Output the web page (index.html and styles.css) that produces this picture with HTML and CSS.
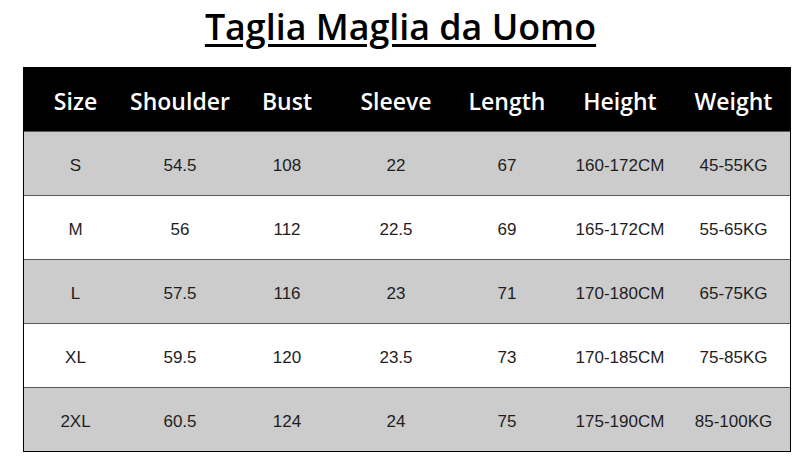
FILE: index.html
```html
<!DOCTYPE html>
<html lang="it">
<head>
<meta charset="utf-8">
<title>Taglia Maglia da Uomo</title>
<link rel="stylesheet" href="styles.css">
</head>
<body>
<h1 class="title">Taglia Maglia da Uomo</h1>
<div class="table">
  <div class="row head">
    <div>Size</div><div>Shoulder</div><div>Bust</div><div>Sleeve</div><div>Length</div><div>Height</div><div>Weight</div>
  </div>
  <div class="row gray">
    <div>S</div><div>54.5</div><div>108</div><div>22</div><div>67</div><div>160-172CM</div><div>45-55KG</div>
  </div>
  <div class="row">
    <div>M</div><div>56</div><div>112</div><div>22.5</div><div>69</div><div>165-172CM</div><div>55-65KG</div>
  </div>
  <div class="row gray">
    <div>L</div><div>57.5</div><div>116</div><div>23</div><div>71</div><div>170-180CM</div><div>65-75KG</div>
  </div>
  <div class="row">
    <div>XL</div><div>59.5</div><div>120</div><div>23.5</div><div>73</div><div>170-185CM</div><div>75-85KG</div>
  </div>
  <div class="row gray last">
    <div>2XL</div><div>60.5</div><div>124</div><div>24</div><div>75</div><div>175-190CM</div><div>85-100KG</div>
  </div>
</div>
</body>
</html>
```
FILE: styles.css
```css
html, body {
  margin: 0;
  padding: 0;
  background: #fff;
}
body {
  width: 812px;
  height: 465px;
  overflow: hidden;
}
.title {
  margin: 0;
  padding: 4px 11px 0 0;
  height: 62px;
  box-sizing: border-box;
  text-align: center;
  font-family: "Open Sans", "Noto Sans", sans-serif;
  font-weight: 600;
  font-size: 35.8px;
  line-height: 44px;
  color: #000;
  text-decoration: underline;
  text-decoration-thickness: 3px;
  text-underline-offset: 4px;
}
.table {
  margin: 5px 0 0 23px;
  width: 768px;
  box-sizing: border-box;
  border-left: 1px solid #000;
  border-right: 1px solid #000;
  border-bottom: 1px solid #000;
}
.row {
  display: grid;
  grid-template-columns: 103px 106px 108px 110px 112px 114px 113px;
  height: 64px;
  box-sizing: border-box;
  align-items: center;
  text-align: center;
  font-family: "Liberation Sans Narrow", "Arial Narrow", "Liberation Sans", sans-serif;
  font-size: 17px;
  color: #1e1e1e;
  background: #fff;
  border-top: 1px solid #5a5a5a;
  padding-top: 5px;
}
.row.gray {
  background: #cccccc;
}
.row.head {
  background: #000;
  color: #fff;
  border-top: none;
  font-family: "Open Sans", "Noto Sans", sans-serif;
  font-weight: 600;
  font-size: 23px;
  padding-top: 4px;
}
```
